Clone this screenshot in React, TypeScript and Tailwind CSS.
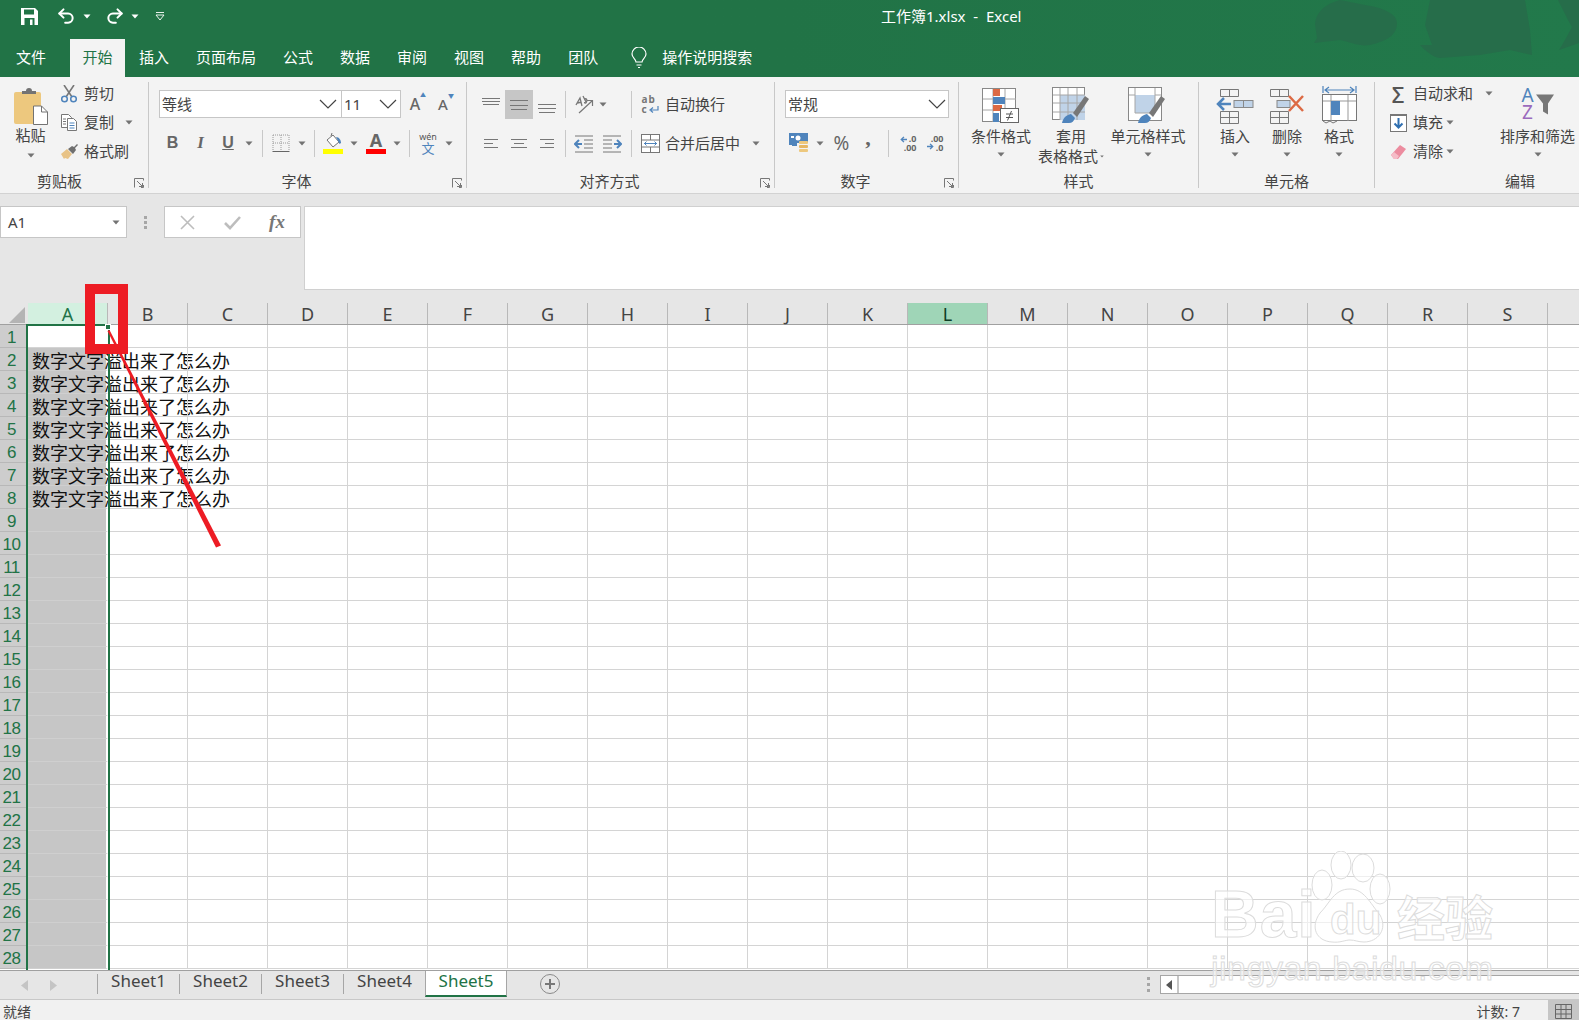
import type { ReactNode } from "react";
import { Redo2, Undo2 } from "lucide-react";

const COLUMNS = "ABCDEFGHIJKLMNOPQRS".split("");
const ROWS = Array.from({ length: 28 }, (_, i) => i + 1);
const TABS = ["插入", "页面布局", "公式", "数据", "审阅", "视图", "帮助", "团队"];
const SHEETS = ["Sheet1", "Sheet2", "Sheet3", "Sheet4"];

function Caret({ className = "" }: { className?: string }) {
  return (
    <svg width="8" height="5" viewBox="0 0 8 5" className={className}>
      <path d="M0.5 0.5h7L4 4.5z" fill="#737373" />
    </svg>
  );
}

function Chevron() {
  return (
    <svg width="18" height="10" viewBox="0 0 18 10" fill="none">
      <path d="M1 1l8 8 8-8" stroke="#444" strokeWidth="1.2" />
    </svg>
  );
}

function Sep() {
  return <div className="h-[27px] w-px bg-[#c8c8c8]" />;
}

// strokes are [x1, x2, y] in an 18x18 box
function Lines({ strokes }: { strokes: number[][] }) {
  return (
    <svg width="18" height="18" viewBox="0 0 18 18">
      {strokes.map(([a, b, y]) => (
        <path key={`${a}-${y}`} d={`M${a} ${y}H${b}`} stroke="#777" strokeWidth="1" />
      ))}
    </svg>
  );
}

function PasteIcon() {
  return (
    <svg width="36" height="38" viewBox="0 0 36 38">
      <rect x="1" y="5" width="27" height="32" rx="2" fill="#edc87e" />
      <path d="M9 7V4h4a3 3 0 0 1 6 0h4v3z" fill="#737373" />
      <path d="M20.5 19h8l6 6v12.5h-14z" fill="#fff" stroke="#737373" />
      <path d="M28.5 19v6h6" fill="none" stroke="#737373" />
    </svg>
  );
}

function ScissorsIcon() {
  return (
    <svg width="16" height="18" viewBox="0 0 16 18" fill="none">
      <path d="M3 0l8 12M13 0L5 12" stroke="#777" strokeWidth="1.600" />
      <circle cx="3.500" cy="14" r="2.800" stroke="#4f84bc" strokeWidth="1.500" />
      <circle cx="12.500" cy="14" r="2.800" stroke="#4f84bc" strokeWidth="1.500" />
    </svg>
  );
}

function CopyIcon() {
  return (
    <svg width="18" height="19" viewBox="0 0 18 19" fill="none">
      <path d="M1.5 1.5h7l3 3v10h-10z" fill="#fff" stroke="#777" />
      <path d="M7.5 5.5h6l3 3v9h-9z" fill="#fff" stroke="#777" />
      <path d="M9.5 10h5M9.5 12.5h5M9.5 15h5" stroke="#4f84bc" />
      <path d="M3 6h3M3 8.5h3M3 11h3" stroke="#777" />
    </svg>
  );
}

function BrushIcon() {
  return (
    <svg width="18" height="16" viewBox="0 0 18 16">
      <path d="M1 10l6-5 5 5-4 5-3-1-1 1z" fill="#e8c387" />
      <path d="M8 5l4-3 2 1 3-3 1 1-3 3 1 2-3 4z" fill="#6f6f6f" />
    </svg>
  );
}

function BorderIcon() {
  return (
    <svg width="18" height="18" viewBox="0 0 18 18" fill="none">
      <path d="M1 1h16M1 1v16M17 1v16M9 1v16M1 9h16" stroke="#999" strokeDasharray="1 1" />
      <path d="M0.5 17.5h17" stroke="#666" />
    </svg>
  );
}

function FillIcon() {
  return (
    <svg width="20" height="22" viewBox="0 0 20 22">
      <path d="M4 8l6-5 6 7-6 5z" fill="#fff" stroke="#737373" />
      <path d="M8 4l1-3" stroke="#737373" />
      <path d="M13 5c3 0 5 3 5 6l-1.500 1z" fill="#4f84bc" />
      <rect y="17" width="20" height="5" fill="#ffff00" />
    </svg>
  );
}

function FontColorIcon() {
  return (
    <div className="flex w-5 flex-col items-center">
      <span className="text-[18px] leading-[17px] font-bold text-[#666]">A</span>
      <div className="h-[5px] w-5 bg-[#ff0000]" />
    </div>
  );
}

function PhoneticIcon() {
  return (
    <div className="flex flex-col items-center text-[#4f84bc]">
      <span className="text-[9px] leading-[10px] text-[#555]">wén</span>
      <span className="text-[13px] leading-[13px]">文</span>
    </div>
  );
}

function OrientIcon() {
  return (
    <svg width="21" height="20" viewBox="0 0 21 20" fill="none">
      <path d="M3 10l4-7 2 8M4.500 8l4-1" stroke="#777" strokeWidth="1.300" />
      <path d="M10 1l3 6M11.500 4c2-1 3 1 2 3s-2 1-2 0" stroke="#777" strokeWidth="1.300" />
      <path d="M6 18L19 6M14 5.500h5.500V11" stroke="#777" strokeWidth="1.200" />
    </svg>
  );
}

function IndentIcon({ flip = false }: { flip?: boolean }) {
  return (
    <svg width="19" height="18" viewBox="0 0 19 18" fill="none" className={flip ? "-scale-x-100" : ""}>
      <path d="M1 1h18M10 5h9M10 9h9M10 13h9M1 17h18" stroke="#777" />
      <path d="M8 9H2M5 5L1 9l4 4" stroke="#4f84bc" strokeWidth="2" />
    </svg>
  );
}

function WrapIcon() {
  return (
    <div className="relative h-[22px] w-[17px] text-[10px] leading-[10px] font-bold text-[#777]">
      <div className="tracking-[1px]">ab</div>
      <div>c</div>
      <svg width="10" height="8" viewBox="0 0 10 8" fill="none" className="absolute right-0 bottom-0.5">
        <path d="M9 0v4H2M4 1.500L1 4l3 2.500" stroke="#4f84bc" strokeWidth="1.200" />
      </svg>
    </div>
  );
}

function MergeIcon() {
  return (
    <svg width="19" height="19" viewBox="0 0 19 19" fill="none">
      <rect x="0.500" y="0.500" width="18" height="18" fill="#fff" stroke="#777" />
      <path d="M1 6h17M1 13h17M9.500 1v5M9.500 13v5" stroke="#777" />
      <path d="M3 9.500h13M5.500 7.500l-2 2 2 2M13.500 7.500l2 2-2 2" stroke="#4f84bc" />
    </svg>
  );
}

function CurrencyIcon() {
  return (
    <svg width="20" height="20" viewBox="0 0 20 20">
      <rect width="19" height="10" fill="#4f84bc" />
      <circle cx="9" cy="5" r="2.500" fill="#fff" />
      <rect x="2" y="3" width="3" height="2" fill="#fff" />
      <path d="M0 10h8v3H3v-1H0z" fill="#4f84bc" />
      <rect x="10" y="8" width="9" height="3" rx="1" fill="#edc87e" />
      <rect x="10" y="12" width="9" height="3" rx="1" fill="#e6b765" />
      <rect x="10" y="16" width="9" height="3" rx="1" fill="#edc87e" />
    </svg>
  );
}

function DecimalIcon({ more = false }: { more?: boolean }) {
  return (
    <div className="relative h-[18px] w-[17px] text-[9px] leading-[9px] font-bold text-[#666]">
      {more ? (
        <>
          <div className="text-right">.00</div>
          <div className="text-right">.0</div>
        </>
      ) : (
        <>
          <div className="text-right">.0</div>
          <div className="text-right">.00</div>
        </>
      )}
      <svg
        width="7"
        height="7"
        viewBox="0 0 8 7"
        fill="none"
        className={more ? "absolute bottom-0.5 left-0 -scale-x-100" : "absolute top-0.5 left-0"}
      >
        <path d="M8 3.500H2M4.500 0.500l-3 3 3 3" stroke="#4f84bc" strokeWidth="1.600" />
      </svg>
    </div>
  );
}

function CondFormatIcon() {
  return (
    <svg width="38" height="36" viewBox="0 0 38 36">
      <rect x="0.500" y="0.500" width="33" height="33" fill="#fff" stroke="#888" />
      <path d="M11 1v33M23 1v33M1 11h33M1 22h33" stroke="#a6a6a6" />
      <rect x="11" y="1" width="7" height="7" fill="#dc6a44" />
      <rect x="11" y="9" width="12" height="7" fill="#4f84bc" />
      <rect x="11" y="17" width="9" height="6" fill="#dc6a44" />
      <rect x="11" y="25" width="6" height="9" fill="#4f84bc" />
      <rect x="18.500" y="20.500" width="18" height="14" fill="#fff" stroke="#666" />
      <path d="M24 26h7M24 29.500h7M29.500 23l-4 9.500" stroke="#555" fill="none" />
    </svg>
  );
}

function PaintTip() {
  return (
    <>
      <path d="M10 36c1-5 4-8 9-9l4 4c-1 3-3 5-6 5z" fill="#4f84bc" />
      <path d="M21 26L33 9l4 3-12 18z" fill="#777" />
    </>
  );
}

function TableStyleIcon() {
  return (
    <svg width="38" height="37" viewBox="0 0 38 37">
      <rect x="0.500" y="0.500" width="32" height="32" fill="#fff" stroke="#888" />
      <rect x="8" y="8" width="25" height="25" fill="#c0d3e8" />
      <path d="M8 1v32M16 1v32M25 1v32M1 8h32M1 16h32M1 25h32" stroke="#a6a6a6" />
      <PaintTip />
    </svg>
  );
}

function CellStyleIcon() {
  return (
    <svg width="40" height="38" viewBox="0 -1 40 38">
      <rect x="0.500" y="0.500" width="33" height="33" fill="#fff" stroke="#888" />
      <rect x="7" y="8" width="20" height="18" fill="#c0d3e8" />
      <path d="M7 1v7M27 1v7M1 8h6M27 8h6M7 8v18M27 8v18M7 26h20" stroke="#a6a6a6" fill="none" />
      <PaintTip />
    </svg>
  );
}

function InsertCellIcon() {
  return (
    <svg width="38" height="36" viewBox="0 0 38 36" fill="none">
      <path d="M4.500 1.500h18v7h-18zM13.500 1.500v7M4.500 23.500h18v12h-18zM13.500 23.500v12M4.500 29.500h18" stroke="#777" />
      <rect x="18" y="12.500" width="19" height="7" fill="#c0d3e8" stroke="#888" />
      <path d="M27.500 12.500v7" stroke="#888" />
      <path d="M15 16H2M8 10l-6 6 6 6" stroke="#4f84bc" strokeWidth="2.500" />
    </svg>
  );
}

function DeleteCellIcon() {
  return (
    <svg width="36" height="36" viewBox="0 0 36 36" fill="none">
      <path d="M1.500 1.500h18v7h-18zM10.500 1.500v7M1.500 23.500h18v12h-18zM10.500 23.500v12M1.500 29.500h18" stroke="#777" />
      <rect x="8" y="12.500" width="13" height="7" fill="#c0d3e8" stroke="#888" />
      <path d="M20 8l14 15M34 8L20 23" stroke="#dc6a44" strokeWidth="2.500" />
    </svg>
  );
}

function FormatCellIcon() {
  return (
    <svg width="35" height="38" viewBox="0 0 35 38" fill="none">
      <path d="M1 0v7M34 0v7M3 4h29M7 1L3 4l4 3M28 1l4 3-4 3" stroke="#4f84bc" strokeWidth="1.200" />
      <rect x="0.500" y="8.500" width="34" height="26" fill="#fff" stroke="#777" />
      <path d="M1 15h33M9 9v26M26 9v26" stroke="#999" />
      <rect x="9" y="15" width="9" height="14" fill="#4f84bc" />
      <path d="M1 35l3 2 4-2 3 2 4-2" stroke="#777" />
    </svg>
  );
}

function FillDownIcon() {
  return (
    <svg width="17" height="18" viewBox="0 0 17 18" fill="none">
      <rect x="0.500" y="0.500" width="16" height="17" fill="#fff" stroke="#777" />
      <rect width="17" height="2" fill="#777" />
      <path d="M8.500 4v9M4.500 9.500l4 4 4-4" stroke="#2f6fb0" strokeWidth="2" />
    </svg>
  );
}

function EraserIcon() {
  return (
    <svg width="17" height="16" viewBox="0 0 17 16">
      <path d="M1 11l9-10 6 4-8 10H4z" fill="#ec8c9f" />
      <path d="M1 11l3-3 5 4-2 3H4z" fill="#f5bcc7" />
    </svg>
  );
}

function SortIcon() {
  return (
    <div className="flex items-start">
      <div className="flex flex-col items-center text-[19px] leading-[17px]">
        <span className="text-[#4f84bc]">A</span>
        <span className="text-[#9b6bbd]">Z</span>
      </div>
      <svg width="18" height="21" viewBox="0 0 18 20" className="mt-[7px] ml-[2px]">
        <path d="M0 0h18l-6 9v11l-5-3V9z" fill="#777" />
      </svg>
    </div>
  );
}

function Launcher() {
  return (
    <svg width="10" height="10" viewBox="0 0 10 10" fill="none" className="absolute right-[4px] bottom-0">
      <path d="M0.500 9.500v-9h9v2M7 9.500h2.500V7M3 3l5.500 5.500M5 8.500h3.500V5" stroke="#777" />
    </svg>
  );
}

function Group({
  label,
  className,
  launcher,
  bodyClass = "",
  labelClass = "",
  children,
}: {
  label: string;
  className: string;
  launcher?: boolean;
  bodyClass?: string;
  labelClass?: string;
  children: ReactNode;
}) {
  return (
    <div className={`relative flex h-[106px] shrink-0 flex-col border-r border-[#c8c8c8] ${className}`}>
      <div className={`h-[92px] ${bodyClass}`}>{children}</div>
      <div className={`h-[14px] text-center text-[15px] leading-[14px] text-[#444] ${labelClass}`}>{label}</div>
      {launcher && <Launcher />}
    </div>
  );
}

function BigButton({
  className,
  icon,
  lines,
  iconClass = "h-[42px]",
}: {
  className: string;
  icon: ReactNode;
  lines: ReactNode;
  iconClass?: string;
}) {
  return (
    <div className={`flex flex-col items-center ${className}`}>
      <div className={`flex items-end ${iconClass}`}>{icon}</div>
      <div className="mt-[2px] flex h-[20px] items-center whitespace-nowrap text-[15px] text-[#444]">{lines}</div>
    </div>
  );
}

function SmallAction({
  icon,
  label,
  caret,
  iconClass,
}: {
  icon: ReactNode;
  label: string;
  caret?: string;
  iconClass: string;
}) {
  return (
    <div className="flex h-[29px] items-center whitespace-nowrap text-[15px] text-[#444]">
      <div className={`flex justify-center ${iconClass}`}>{icon}</div>
      <span>{label}</span>
      {caret && <Caret className={caret} />}
    </div>
  );
}

function Ribbon() {
  return (
    <div className="flex h-[117px] items-start border-b border-[#d2d2d2] bg-[#f3f3f3] pt-[5px]">
      <Group label="剪贴板" className="w-[149px]" launcher labelClass="pr-[29px]" bodyClass="flex pl-[12px]">
        <div className="flex w-[37px] flex-col items-center pt-[5px]">
          <PasteIcon />
          <div className="mt-[-1px] flex h-[22px] items-center text-[15px] text-[#444]">粘贴</div>
          <Caret className="mt-[7px]" />
        </div>
        <div className="mt-[-3px] ml-[10px] flex flex-col">
          <SmallAction iconClass="mr-[5px] w-[20px]" icon={<ScissorsIcon />} label="剪切" />
          <SmallAction iconClass="mr-[5px] w-[20px]" icon={<CopyIcon />} label="复制" caret="ml-[11px]" />
          <SmallAction iconClass="mr-[5px] w-[20px]" icon={<BrushIcon />} label="格式刷" />
        </div>
      </Group>

      <Group label="字体" className="w-[318px]" launcher labelClass="pr-[22px]" bodyClass="pl-[10px] pt-[8px]">
        <div className="flex h-[28px] items-center">
          <div className="flex h-[28px] w-[183px] items-center justify-between border border-[#c6c6c6] bg-white pr-[4px] pl-[2px] text-[15px] text-[#444]">
            等线
            <Chevron />
          </div>
          <div className="flex h-[28px] w-[59px] items-center justify-between border border-l-0 border-[#c6c6c6] bg-white pr-[3px] pl-[2px] text-[15px] text-[#444]">
            11
            <Chevron />
          </div>
          <div className="relative flex w-[28px] justify-center text-[16px] font-medium text-[#666]">
            A<span className="absolute top-[-1px] right-[3px] text-[6px] text-[#4f84bc]">▲</span>
          </div>
          <div className="relative flex w-[28px] justify-center text-[15px] font-medium text-[#666]">
            A<span className="absolute top-[-1px] right-[3px] text-[6px] text-[#4f84bc]">▼</span>
          </div>
        </div>
        <div className="mt-[11px] flex h-[28px] items-center text-[#666]">
          <div className="flex w-[27px] justify-center font-['Liberation_Sans',sans-serif] text-[16px] font-bold">B</div>
          <div className="flex w-[29px] justify-center font-['Liberation_Serif',serif] text-[17px] font-bold italic">I</div>
          <div className="flex w-[26px] justify-center font-['Liberation_Sans',sans-serif] text-[16px] font-bold underline">U</div>
          <div className="flex w-[16px] justify-center"><Caret /></div>
          <div className="flex w-[10px] justify-center"><Sep /></div>
          <div className="flex w-[28px] justify-center"><BorderIcon /></div>
          <div className="flex w-[14px] justify-center"><Caret /></div>
          <div className="flex w-[10px] justify-center"><Sep /></div>
          <div className="flex w-[28px] justify-center"><FillIcon /></div>
          <div className="flex w-[14px] justify-center"><Caret /></div>
          <div className="flex w-[30px] justify-center"><FontColorIcon /></div>
          <div className="flex w-[12px] justify-center"><Caret /></div>
          <div className="flex w-[12px] justify-center"><Sep /></div>
          <div className="flex w-[26px] justify-center"><PhoneticIcon /></div>
          <div className="flex w-[16px] justify-center"><Caret /></div>
        </div>
      </Group>

      <Group label="对齐方式" className="w-[308px]" launcher labelClass="pr-[22px]" bodyClass="pl-[10px] pt-[8px]">
        <div className="flex h-[29px] items-center">
          <div className="flex w-[28px] justify-center"><Lines strokes={[[0, 18, 2.5], [0, 18, 5.5], [1, 17, 8.5]]} /></div>
          <div className="flex h-[29px] w-[28px] items-center justify-center bg-[#c6c6c6]"><Lines strokes={[[0, 18, 4.5], [0, 18, 9.5], [1, 17, 13.5]]} /></div>
          <div className="flex w-[28px] justify-center"><Lines strokes={[[0, 18, 8.5], [0, 18, 12.5], [1, 17, 16.5]]} /></div>
          <div className="flex w-[8px] justify-center"><Sep /></div>
          <div className="flex w-[28px] justify-center"><OrientIcon /></div>
          <div className="flex w-[12px] justify-center"><Caret /></div>
          <div className="w-[18px]" />
          <div className="flex w-[8px] justify-center"><Sep /></div>
          <div className="flex w-[30px] justify-center"><WrapIcon /></div>
          <span className="whitespace-nowrap text-[15px] text-[#444]">自动换行</span>
        </div>
        <div className="mt-[10px] flex h-[29px] items-center">
          <div className="flex w-[28px] justify-center"><Lines strokes={[[2, 16, 4.5], [2, 11, 8.5], [2, 16, 12.5]]} /></div>
          <div className="flex w-[28px] justify-center"><Lines strokes={[[1, 17, 4.5], [4, 14, 8.5], [1, 17, 12.5]]} /></div>
          <div className="flex w-[28px] justify-center"><Lines strokes={[[2, 16, 4.5], [7, 16, 8.5], [2, 16, 12.5]]} /></div>
          <div className="flex w-[8px] justify-center"><Sep /></div>
          <div className="flex w-[28px] justify-center"><IndentIcon /></div>
          <div className="flex w-[30px] justify-center"><IndentIcon flip /></div>
          <div className="flex w-[8px] justify-center"><Sep /></div>
          <div className="flex w-[30px] justify-center"><MergeIcon /></div>
          <span className="whitespace-nowrap text-[15px] text-[#444]">合并后居中</span>
          <Caret className="ml-[12px]" />
        </div>
      </Group>

      <Group label="数字" className="w-[184px]" launcher labelClass="pr-[22px]" bodyClass="pl-[10px] pt-[8px]">
        <div className="flex h-[28px] w-[164px] items-center justify-between border border-[#c6c6c6] bg-white pr-[2px] pl-[2px] text-[15px] text-[#444]">
          常规
          <Chevron />
        </div>
        <div className="mt-[11px] flex h-[28px] items-center text-[#666]">
          <div className="flex w-[27px] justify-center"><CurrencyIcon /></div>
          <div className="flex w-[16px] justify-center"><Caret /></div>
          <div className="flex w-[27px] justify-center text-[19px] leading-none">%</div>
          <div className="flex w-[26px] justify-center pb-[10px] font-['Liberation_Serif',serif] text-[22px] leading-none font-bold">,</div>
          <div className="flex w-[14px] justify-center"><Sep /></div>
          <div className="flex w-[26px] justify-center"><DecimalIcon /></div>
          <div className="flex w-[28px] justify-center"><DecimalIcon more /></div>
        </div>
      </Group>

      <Group label="样式" className="w-[240px]" bodyClass="flex pl-[5px]">
        <div className="w-[74px]">
          <BigButton className="w-full" icon={<CondFormatIcon />} lines="条件格式" />
          <div className="mt-[6px] flex justify-center"><Caret /></div>
        </div>
        <div className="w-[66px]">
          <BigButton className="w-full" icon={<TableStyleIcon />} lines="套用" />
          <div className="flex h-[20px] items-center justify-center whitespace-nowrap text-[15px] text-[#444]">
            表格格式<Caret className="ml-[2px]" />
          </div>
        </div>
        <div className="w-[88px]">
          <BigButton className="w-full" icon={<CellStyleIcon />} lines="单元格样式" />
          <div className="mt-[6px] flex justify-center"><Caret /></div>
        </div>
      </Group>

      <Group label="单元格" className="w-[176px]" bodyClass="flex pl-[8px]">
        <div className="w-[56px]">
          <BigButton className="w-full" icon={<InsertCellIcon />} lines="插入" />
          <div className="mt-[6px] flex justify-center"><Caret /></div>
        </div>
        <div className="w-[48px]">
          <BigButton className="w-full" icon={<DeleteCellIcon />} lines="删除" />
          <div className="mt-[6px] flex justify-center"><Caret /></div>
        </div>
        <div className="w-[56px]">
          <BigButton className="w-full" icon={<FormatCellIcon />} lines="格式" />
          <div className="mt-[6px] flex justify-center"><Caret /></div>
        </div>
      </Group>

      <div className="relative flex h-[106px] min-w-0 flex-1 flex-col">
        <div className="flex h-[92px] pl-[14px]">
          <div className="mt-[-3px] flex w-[111px] flex-col">
            <SmallAction
              iconClass="mr-[6px] w-[18px]"
              icon={<span className="text-[22px] leading-none font-medium text-[#555]">Σ</span>}
              label="自动求和"
              caret="ml-[12px]"
            />
            <SmallAction iconClass="mr-[6px] w-[18px]" icon={<FillDownIcon />} label="填充" caret="ml-[3px]" />
            <SmallAction iconClass="mr-[6px] w-[18px]" icon={<EraserIcon />} label="清除" caret="ml-[3px]" />
          </div>
          <div className="w-[75px]">
            <BigButton className="w-full" icon={<SortIcon />} iconClass="h-[42px] pb-[3px]" lines="排序和筛选" />
            <div className="mt-[6px] flex justify-center"><Caret /></div>
          </div>
        </div>
        <div className="h-[14px] pl-[130px] text-[15px] leading-[14px] text-[#444]">编辑</div>
      </div>
    </div>
  );
}

function FormulaBar() {
  return (
    <div className="flex h-[109px] items-start bg-[#e6e6e6] pt-[12px]">
      <div className="flex h-[32px] w-[127px] items-center justify-between border border-[#c6c6c6] bg-white pr-[6px] pl-[7px] text-[15px] text-[#444]">
        A1
        <Caret />
      </div>
      <div className="flex h-[32px] w-[37px] flex-col items-center justify-center gap-[2px]">
        <div className="size-[3px] bg-[#a6a6a6]" />
        <div className="size-[3px] bg-[#a6a6a6]" />
        <div className="size-[3px] bg-[#a6a6a6]" />
      </div>
      <div className="flex h-[32px] w-[137px] items-center border border-[#c6c6c6] bg-white text-[#b4b4b4]">
        <div className="flex w-[44px] justify-center">
          <svg width="15" height="15" viewBox="0 0 15 15" fill="none">
            <path d="M1 1l13 13M14 1L1 14" stroke="#bdbdbd" strokeWidth="1.600" />
          </svg>
        </div>
        <div className="flex w-[46px] justify-center">
          <svg width="17" height="15" viewBox="0 0 17 15" fill="none">
            <path d="M1 8l5 5L16 2" stroke="#bdbdbd" strokeWidth="2.600" />
          </svg>
        </div>
        <div className="flex w-[44px] justify-center font-['Liberation_Serif',serif] text-[19px] font-bold text-[#777] italic">
          fx
        </div>
      </div>
      <div className="ml-[3px] h-[84px] flex-1 border-y border-l border-[#d0d0d0] bg-white" />
    </div>
  );
}

function Grid() {
  return (
    <div className="relative h-[667px] overflow-hidden bg-white">
      <div className="flex h-[22px] border-b border-[#a0a0a0] bg-[#e6e6e6] text-[18px] text-[#444]">
        <div className="flex w-[28px] items-end justify-end pr-[3px] pb-[1px]">
          <svg width="16" height="16" viewBox="0 0 16 16">
            <path d="M16 0v16H0z" fill="#b4b4b4" />
          </svg>
        </div>
        {COLUMNS.map((col) => (
          <div
            key={col}
            className={`flex w-[80px] items-center justify-center border-r border-[#b8b8b8] leading-none ${
              col === "A" ? "bg-[#d3f0e0] text-[#217346]" : col === "L" ? "bg-[#9fd5b7] text-[#0f3d26]" : ""
            }`}
          >
            {col}
          </div>
        ))}
      </div>

      {ROWS.map((row) => (
        <div key={row} className="flex h-[23px]">
          <div className="flex w-[28px] items-center justify-center border-b border-[#b8b8b8] bg-[#cdcdcd] pt-[4px] pr-[5px] font-['Liberation_Sans',sans-serif] text-[17px] tracking-[-0.5px] text-[#217346]">
            {row}
          </div>
          <div
            className={`w-[80px] whitespace-nowrap border-r-2 border-b pt-[2px] pl-[4px] text-[18px] leading-[23px] text-[#111] ${
              row === 1 ? "border-[#d4d4d4] border-r-white bg-white" : "border-b-[#cfcfcf] border-r-white bg-[#c6c6c6]"
            }`}
          >
            {row >= 2 && row <= 8 ? "数字文字溢出来了怎么办" : ""}
          </div>
          {COLUMNS.slice(1).map((col) => (
            <div key={col} className="w-[80px] border-r border-b border-[#d4d4d4]" />
          ))}
          <div className="flex-1 border-b border-[#d4d4d4]" />
        </div>
      ))}

      {/* active selection over column A */}
      <div className="absolute top-[21px] bottom-0 left-[26px] w-[84px] border-x-2 border-t-2 border-[#217346]" />
      <div className="absolute top-[21px] left-[105px] size-[6px] border border-white bg-[#217346]" />
    </div>
  );
}

function SheetBar() {
  return (
    <div className="flex h-[30px] items-start border-y border-t-[#a0a0a0] border-b-[#c8c8c8] bg-[#e6e6e6]">
      <div className="flex h-[26px] w-[97px] items-center pl-[21px]">
        <svg width="8" height="11" viewBox="0 0 8 11" className="mt-[3px]"><path d="M7 0v11L0 5.500z" fill="#c4c4c4" /></svg>
        <svg width="8" height="11" viewBox="0 0 8 11" className="mt-[3px] ml-[20px]"><path d="M1 0v11l7-5.500z" fill="#c4c4c4" /></svg>
      </div>
      {SHEETS.map((sheet) => (
        <div
          key={sheet}
          className="mt-[3px] flex h-[20px] w-[82px] items-center justify-center border-l border-[#a6a6a6] pb-[7px] text-[17px] text-[#444]"
        >
          {sheet}
        </div>
      ))}
      <div className="flex h-[26px] w-[82px] items-center justify-center border-x border-b-2 border-[#a6a6a6] border-b-[#217346] bg-white pb-[5px] text-[17px] text-[#217346]">
        Sheet5
      </div>
      <div className="mt-[3px] ml-[33px] flex size-[20px] items-center justify-center rounded-full border border-[#8a8a8a]">
        <svg width="12" height="12" viewBox="0 0 12 12"><path d="M6 1v10M1 6h10" stroke="#777" strokeWidth="2" /></svg>
      </div>
      <div className="mt-[6px] ml-[577px] flex w-[23px] flex-col items-center gap-[3px]">
        <div className="size-[3px] bg-[#a6a6a6]" />
        <div className="size-[3px] bg-[#a6a6a6]" />
        <div className="size-[3px] bg-[#a6a6a6]" />
      </div>
      <div className="mt-[4px] flex h-[19px] flex-1 border-y border-l border-[#a6a6a6] bg-white">
        <div className="flex w-[18px] items-center justify-center border-r-2 border-[#c6c6c6]">
          <svg width="6" height="10" viewBox="0 0 6 10"><path d="M6 0v10L0 5z" fill="#555" /></svg>
        </div>
      </div>
    </div>
  );
}

function StatusBar() {
  return (
    <div className="flex h-[22px] items-center bg-[#f1f1f1] pl-[3px] text-[14px] leading-[18px] text-[#444]">
      <span className="pt-[2px]">就绪</span>
      <span className="ml-auto pt-[2px]">计数: 7</span>
      <div className="ml-[28px] flex h-[22px] w-[31px] items-center justify-center bg-[#c6c6c6]">
        <svg width="17" height="15" viewBox="0 0 17 15" fill="none">
          <path d="M0.500 0.500h16v14h-16zM0.500 5.500h16M0.500 10h16M6 0.500v14M11 0.500v14" stroke="#666" />
        </svg>
      </div>
    </div>
  );
}

export default function App() {
  return (
    <div className="relative h-[1020px] w-[1579px] overflow-hidden bg-[#e6e6e6] font-['Noto_Sans','Noto_Sans_CJK_SC',sans-serif]">
      <div className="relative h-[77px] bg-gradient-to-r from-[#217346] from-50% to-[#22794b]">
        {/* mottled banner art in the title bar */}
        <svg width="299" height="60" viewBox="1280 0 299 60" className="absolute top-0 right-0">
          <path
            d="M1314 43l3-5-2-14c1-12 10-20 25-24l25 5c15 2 32 8 32 18 0 12-10 18-27 22-10 2-20-3-30-5z"
            fill="#266d4a"
          />
          <path
            d="M1420 45l5 5c5 4 10 8 15 8l40-3 30-5 22 5-2-25-5-30h-95l-5 25 7 20z"
            fill="#266d4a"
          />
          <path d="M1558 0l10 20 4 7-7 13-6 10 20-7V0z" fill="#266d4a" />
        </svg>

        <div className="relative flex h-[39px] items-center pb-[7px] text-white">
          <div className="flex w-[58px] justify-center">
            <svg width="17" height="17" viewBox="0 0 17 17">
              <path d="M0 0h14l3 3v14H0z" fill="#fff" />
              <rect x="3" y="1.500" width="10" height="5" fill="#217346" />
              <rect x="3.500" y="10" width="10" height="7" fill="#217346" />
              <rect x="9" y="11.500" width="2.500" height="5.500" fill="#fff" />
            </svg>
          </div>
          <Undo2 size={20} strokeWidth={2.400} className="-ml-[2px]" />
          <Caret className="ml-[7px] brightness-[4]" />
          <Redo2 size={20} strokeWidth={2.400} className="ml-[14px]" />
          <Caret className="ml-[6px] brightness-[4]" />
          <svg width="10" height="9" viewBox="0 0 10 9" fill="none" className="ml-[16px]">
            <path d="M1 0.500h8M1 3l4 5 4-5z" stroke="#fff" strokeWidth="0.900" />
          </svg>
          <span className="ml-[716px] whitespace-pre text-[15px]">工作簿1.xlsx  -  Excel</span>
        </div>

        <div className="relative flex h-[38px] items-center pb-[2px] text-[15px] text-white">
          <span className="ml-[16px]">文件</span>
          <div className="mt-[2px] ml-[24px] flex h-[38px] w-[55px] items-center justify-center bg-[#f3f3f3] pb-[2px] text-[#217346]">开始</div>
          <div className="ml-[14px] flex items-center gap-[27px] whitespace-nowrap">
            {TABS.map((tab) => (
              <span key={tab}>{tab}</span>
            ))}
          </div>
          <svg width="16" height="21" viewBox="0 0 16 21" fill="none" className="ml-[33px]">
            <path d="M5 15c0-3-4-4-4-8a7 7 0 0 1 14 0c0 4-4 5-4 8zM5.500 18h5M7 20.500h2" stroke="#fff" strokeWidth="1.200" />
          </svg>
          <span className="ml-[15px] whitespace-nowrap">操作说明搜索</span>
        </div>
      </div>

      <Ribbon />
      <FormulaBar />
      <Grid />
      <SheetBar />
      <StatusBar />

      {/* screenshot annotation */}
      <div className="absolute top-[284px] left-[85px] h-[70px] w-[43px] border-[10px] border-[#ed1c24]" />
      <svg width="1579" height="1020" className="pointer-events-none absolute top-0 left-0">
        <path d="M107.500 331L109.500 330L221 545.500L216 547.500z" fill="#ed1c24" />
      </svg>

      {/* baidu watermark */}
      <div className="pointer-events-none absolute top-[851px] left-[1211px] h-[140px] w-[285px] font-['Liberation_Sans',sans-serif] text-white/60 [-webkit-text-stroke:1px_#dcdcdc]">
        <span className="absolute top-[28px] left-0 text-[66px] leading-[70px] font-bold tracking-[1px]">Bai</span>
        <svg width="84" height="94" viewBox="0 0 84 94" fill="none" className="absolute top-0 left-[97px]" stroke="#dcdcdc">
          <ellipse cx="33" cy="14" rx="10" ry="14" fill="#ffffffa0" />
          <ellipse cx="55" cy="17" rx="11" ry="14" fill="#ffffffa0" />
          <ellipse cx="14" cy="34" rx="10" ry="15" fill="#ffffffa0" />
          <ellipse cx="72" cy="38" rx="10" ry="15" fill="#ffffffa0" />
          <path d="M42 38c14 0 20 14 30 26 8 14-2 27-16 27-6 0-9-2-14-2s-10 3-18 2C8 90 2 76 12 62c10-10 14-24 30-24z" fill="#ffffffa0" />
        </svg>
        <span className="absolute top-[47px] left-[119px] text-[42px] leading-[44px] font-bold">du</span>
        <span className="absolute top-[34px] left-[186px] font-['Noto_Sans_CJK_SC',sans-serif] text-[48px] leading-[60px] font-bold">经验</span>
        <span className="absolute top-[96px] left-0 text-[34px] leading-[42px] tracking-[0.5px]">jingyan.baidu.com</span>
      </div>
    </div>
  );
}
